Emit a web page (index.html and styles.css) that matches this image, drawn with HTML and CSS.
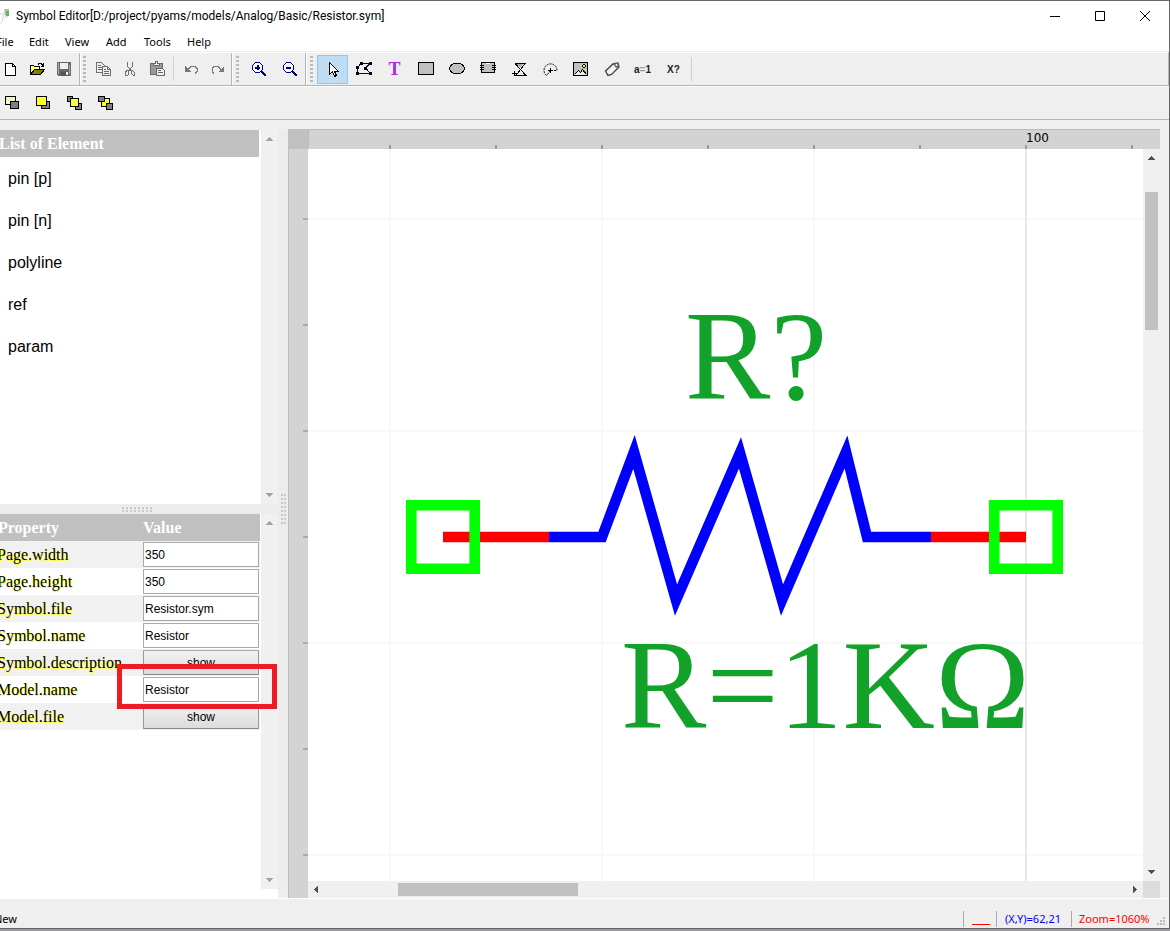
FILE: index.html
```
<!DOCTYPE html>
<html lang="en">
<head>
<meta charset="utf-8">
<title>Symbol Editor</title>
<link rel="stylesheet" href="styles.css">
</head>
<body>
<div class="window">
  <header class="titlebar">
    <svg class="app-icon" width="12" height="18" viewBox="0 0 12 18"><path d="M0 7Q4 5 3 11T0 16M4 5l2 6 3-3" fill="none" stroke="#d0d3df"/><path d="M4 2h5v6H5z" fill="#b5bab8"/><path d="M6 4h3v5H6z" fill="#62b562"/></svg>
    <h1 class="title">Symbol Editor[D:/project/pyams/models/Analog/Basic/Resistor.sym]</h1>
    <div class="window-controls">
      <button aria-label="Minimize"><svg width="12" height="12"><path d="M1 6.500h10" stroke="#000"/></svg></button>
      <button aria-label="Maximize"><svg width="12" height="12"><path d="M1.500 1.500h9v9h-9z" fill="none" stroke="#000"/></svg></button>
      <button aria-label="Close"><svg width="12" height="12"><path d="M1 1l10 10M11 1L1 11" stroke="#000"/></svg></button>
    </div>
  </header>
  <nav class="menubar">
    <button class="m-file">File</button><button class="m-edit">Edit</button><button class="m-view">View</button><button class="m-add">Add</button><button class="m-tools">Tools</button><button class="m-help">Help</button>
  </nav>

  <div class="toolbar">
    <div class="group group-first">
      <button class="narrow" aria-label="New"><svg class="icon" viewBox="0 0 16 16"><path d="M3.500 2.500h7l3 3v9h-10z" fill="#fff" stroke="#000"/><path d="M10.500 2.500v3h3" fill="none" stroke="#000"/></svg></button>
      <button class="narrow" aria-label="Open"><svg class="icon" viewBox="0 0 16 16"><path d="M1.500 13.500v-9h3l1 1h5v3" fill="#ffff80" stroke="#000"/><path d="M1.500 13.500l4-5h10l-4 5z" fill="#808000" stroke="#000"/><path d="M9 3.500l1-1h2l2 2M14.500 2v3h-3" fill="none" stroke="#000"/></svg></button>
      <button class="narrow" aria-label="Save"><svg class="icon" viewBox="0 0 16 16"><path d="M1 1h14v14H2L1 14z" fill="#686868"/><path d="M4 2h8v6H4z" fill="#efefef"/><path d="M2 2h1v11H2zM13 4h1v9h-1z" fill="#aaa"/><path d="M5 11h7v4H5z" fill="#555"/><path d="M10 11h2v3h-2z" fill="#eee"/></svg></button>
    </div>
    <div class="group">
      <span class="grip"></span>
      <button class="narrow" aria-label="Copy"><svg class="icon" viewBox="0 0 16 16"><g fill="#efefef" stroke="#6e6e6e"><path d="M1.500 1.500h5l3 3v7h-8z"/><path d="M3 4.500h3M3 6.500h5M3 8.500h5"/><path d="M7.500 5.500h5l3 3v6h-8z"/><path d="M12.500 5.500v3h3M9 8.500h2M9 10.500h5M9 12.500h5" fill="none"/></g></svg></button>
      <button class="narrow" aria-label="Cut"><svg class="icon" viewBox="0 0 16 16"><path d="M5.500 1v4l4 6M10.500 1v4l-4 6M8 7v2" fill="none" stroke="#707070"/><path d="M4.500 9.500h2v4l-1 1h-2v-3zM10.500 9.500h-1v3l2 2h1v-3z" fill="none" stroke="#707070"/></svg></button>
      <button class="narrow" aria-label="Paste"><svg class="icon" viewBox="0 0 16 16"><path d="M1.500 2.500h12v11h-12z" fill="#9a9a9a" stroke="#686868"/><path d="M4.500 4.500v-2h2v-2h2v2h2v2z" fill="#efefef" stroke="#686868"/><path d="M7.500 7.500h6l2 2v5h-8z" fill="#efefef" stroke="#686868"/><path d="M9 9.500h3M9 11.500h5" stroke="#686868"/></svg></button>
      <span class="divider wide"></span>
      <button class="narrow" aria-label="Undo"><svg class="icon" viewBox="0 0 16 16"><path d="M5 8.500l3-3h4l2 2v3l-2 2" fill="none" stroke="#777"/><path d="M2 5v6h6z" fill="#777"/></svg></button>
      <button class="narrow" aria-label="Redo"><svg class="icon" viewBox="0 0 16 16"><path d="M11 8.500l-3-3H4l-2 2v3l2 2" fill="none" stroke="#777"/><path d="M14 5v6H8z" fill="#777"/></svg></button>
    </div>
    <div class="group">
      <span class="grip grip-wide"></span>
      <button aria-label="Zoom in"><svg class="icon" viewBox="0 0 16 16"><path d="M4.500 1.500h4l3 3v4l-3 3h-4l-3-3v-4z" fill="#f7f7ff" stroke="#000080"/><path d="M4 6h5v1H4zM4 6h5v1.500H4zM6 4h1.500v5H6z" fill="#000080"/><path d="M10 10l5 5" stroke="#000080" stroke-width="2"/></svg></button>
      <button aria-label="Zoom out"><svg class="icon" viewBox="0 0 16 16"><path d="M4.500 1.500h4l3 3v4l-3 3h-4l-3-3v-4z" fill="#f7f7ff" stroke="#000080"/><path d="M4 6h5v2H4z" fill="#000080"/><path d="M10 10l5 5" stroke="#000080" stroke-width="2"/></svg></button>
    </div>
    <div class="group group-last">
      <span class="grip grip-wide"></span>
      <button class="active" aria-label="Select" aria-pressed="true"><svg class="icon" viewBox="0 0 16 16"><path d="M4.500 1.500v12l3-3 2 5 2-1-2-4h4z" fill="#fff" stroke="#000"/></svg></button>
      <button aria-label="Polyline"><svg class="icon" viewBox="0 0 16 16"><path d="M14 2.500H5L1.500 6.500v6h13L9.500 7z" fill="none" stroke="#000080"/><path d="M4 1h3v3H4zM13 1h3v3h-3zM0 5h3v3H0zM8 6h3v3H8zM0 11h3v3H0zM13 11h3v3h-3z"/></svg></button>
      <button class="tool-text" aria-label="Text">T</button>
      <button aria-label="Rectangle"><svg class="icon" viewBox="0 0 16 16"><path d="M.5 1.500h15v12H.5z" fill="#c0c0c0" stroke="#000"/></svg></button>
      <button aria-label="Ellipse"><svg class="icon" viewBox="0 0 16 16"><ellipse cx="8" cy="7.500" rx="7.500" ry="5.500" fill="#c0c0c0" stroke="#000"/></svg></button>
      <button aria-label="Component"><svg class="icon" viewBox="0 0 16 16"><path d="M1.500 1.500h13v10h-13z" fill="#c0c0c0" stroke="#000"/><path d="M0 4.500h4M0 6.500h4M0 8.500h4M12 4.500h4M12 6.500h4M12 8.500h4" stroke="#000"/><path d="M6 2.500h4" stroke="#fff"/></svg></button>
      <button aria-label="Polygon"><svg class="icon" viewBox="0 0 16 16"><path d="M4 2.500h10L5 14.500h10L4 2.500" fill="none" stroke="#000"/><path d="M6 3h6L9 7z" fill="#aaa"/><path d="M1 12.500h5M3.500 10v5" stroke="#000"/></svg></button>
      <button aria-label="Arc"><svg class="icon smooth" viewBox="0 0 16 16"><path d="M4.500 14.500A6.500 6.500 0 1 1 15 9.500H8.500z" fill="none" stroke="#000" stroke-dasharray="2 1"/><path d="M6 9.500h5M8.500 7v5" stroke="#000"/></svg></button>
      <button aria-label="Image"><svg class="icon" viewBox="0 0 16 16"><path d="M.5 1.500h14v13H.5z" fill="#c0c0c0" stroke="#000"/><path d="M2 14l3-4 2 2 2-3 4 5z" fill="#eee"/><path d="M1.500 13.500l4-4 2 2 2-3 4 5" fill="none" stroke="#000"/><path d="M9 4h1V3h2v1h1v2h-1v1h-2V6H9z"/><path d="M10 4h2v2h-2z" fill="#ff0"/></svg></button>
      <button aria-label="Label"><svg class="icon smooth" viewBox="0 0 16 16"><path d="M1.500 10L9 3l5-1 1 4-7.500 7.500L4 14.500z" fill="#f4f4f4" stroke="#444" stroke-width="1.400"/><path d="M9 3l5-1 1 4-3 1z" fill="#666"/><circle cx="12.500" cy="4" r="1" fill="#fff"/></svg></button>
      <button class="tool-label" aria-label="Parameter">a<span class="eq">=</span>1</button>
      <button class="tool-label" aria-label="Reference">X?</button>
      <span class="divider"></span>
    </div>
  </div>

  <div class="toolbar toolbar-order">
    <div class="group group-first group-last">
      <button aria-label="Bring forward"><svg class="icon" viewBox="0 0 16 16"><path d="M1.500 1.500h10v8h-10z" fill="#f4f4c0" stroke="#000"/><path d="M6.500 6.500h8v7h-8z" fill="#808080" stroke="#000"/></svg></button>
      <button aria-label="Bring to front"><svg class="icon" viewBox="0 0 16 16"><path d="M6.500 6.500h8v7h-8z" fill="#808080" stroke="#000"/><path d="M1.500 1.500h10v9h-10z" fill="#ffff30" stroke="#000"/></svg></button>
      <button aria-label="Send backward"><svg class="icon" viewBox="0 0 16 16"><path d="M1.500 1.500h5v5h-5zM9.500 8.500h6v6h-6z" fill="#808080" stroke="#000"/><path d="M4.500 3.500h8v8h-8z" fill="#ffff30" stroke="#000"/></svg></button>
      <button aria-label="Send to back"><svg class="icon" viewBox="0 0 16 16"><path d="M4.500 3.500h8v8h-8z" fill="#ffff30" stroke="#000"/><path d="M1.500 1.500h6v5h-6zM9.500 8.500h6v6h-6z" fill="#808080" stroke="#000"/></svg></button>
    </div>
  </div>

  <main class="workspace">
    <aside class="sidebar">
      <div class="panels">
        <section class="panel elements">
          <div class="content">
            <h2 class="panel-title">List of Element</h2>
            <ul class="element-list"><li>pin [p]</li><li>pin [n]</li><li>polyline</li><li>ref</li><li>param</li></ul>
          </div>
          <div class="scroll-v light"><svg class="arrow" viewBox="0 0 7 4"><path d="M0 4h7L3.500 0z"/></svg><svg class="arrow" viewBox="0 0 7 4"><path d="M0 0h7L3.500 4z"/></svg></div>
        </section>
        <div class="split-h"><span class="dots dots-h"></span></div>
        <section class="panel properties">
          <div class="content">
            <table class="props">
              <thead><tr><th>Property</th><th>Value</th></tr></thead>
              <tbody>
                <tr><td><label for="pw">Page.width</label></td><td><input id="pw" type="text" value="350"></td></tr>
                <tr><td><label for="ph">Page.height</label></td><td><input id="ph" type="text" value="350"></td></tr>
                <tr><td><label for="sf">Symbol.file</label></td><td><input id="sf" type="text" value="Resistor.sym"></td></tr>
                <tr><td><label for="sn">Symbol.name</label></td><td><input id="sn" type="text" value="Resistor"></td></tr>
                <tr><td><label for="sd">Symbol.description</label></td><td><button id="sd">show</button></td></tr>
                <tr><td><label for="mn">Model.name</label></td><td><input id="mn" type="text" value="Resistor"></td></tr>
                <tr><td><label for="mf">Model.file</label></td><td><button id="mf">show</button></td></tr>
              </tbody>
            </table>
          </div>
          <div class="scroll-v light"><svg class="arrow" viewBox="0 0 7 4"><path d="M0 4h7L3.500 0z"/></svg><svg class="arrow" viewBox="0 0 7 4"><path d="M0 0h7L3.500 4z"/></svg></div>
          <div class="highlight"></div>
        </section>
      </div>
      <div class="split-v"><span class="dots dots-v"></span></div>
    </aside>

    <section class="editor">
      <div class="corner"></div>
      <svg class="ruler-top"><defs><pattern id="tx" x="-26" width="106" height="20" patternUnits="userSpaceOnUse"><path d="M0 15h2v5H0z" fill="#999"/></pattern></defs><rect width="100%" height="100%" fill="url(#tx)"/><text x="717" y="12">100</text></svg>
      <svg class="ruler-left"><defs><pattern id="ty" y="-37" width="19" height="106" patternUnits="userSpaceOnUse"><path d="M14 0h5v2h-5z" fill="#aaa"/></pattern></defs><rect width="100%" height="100%" fill="url(#ty)"/></svg>
      <div class="view">
        <svg class="canvas">
          <defs><pattern id="grid" x="81" y="69" width="212" height="212" patternUnits="userSpaceOnUse"><path d="M0 0h2v212H0zM0 0h212v2H0z" fill="#f8f8f8"/></pattern></defs>
          <rect width="100%" height="100%" fill="url(#grid)"/>
          <path d="M717 0h2v2000h-2z" fill="#e8e8e8"/>
          <g fill="none" stroke-width="10.600">
            <path d="M135 388H241M623 388H718" stroke="#f00"/>
            <path d="M241 388H294L326 303 368 451 432 304 474 451 538 303 559 388H623" stroke="#00f" stroke-miterlimit="10"/>
            <path d="M103.300 356.300h63.400v63.400h-63.400zM686.300 356.300h63.400v63.400h-63.400z" stroke="#0f0"/>
          </g>
          <text x="377" y="250">R?</text>
          <text x="313" y="579">R=1KΩ</text>
        </svg>
        <div class="scroll-v"><svg class="arrow" viewBox="0 0 7 4"><path d="M0 4h7L3.500 0z"/></svg><span class="thumb"></span><svg class="arrow" viewBox="0 0 7 4"><path d="M0 0h7L3.500 4z"/></svg></div>
        <div class="scroll-h"><svg class="arrow side" viewBox="0 0 4 7"><path d="M4 0v7L0 3.500z"/></svg><span class="thumb"></span><svg class="arrow side" viewBox="0 0 4 7"><path d="M0 0v7L4 3.500z"/></svg></div>
        <div class="scroll-corner"></div>
      </div>
    </section>
  </main>

  <footer class="statusbar">
    <span class="message">New</span>
    <span class="cell modified"><i></i></span>
    <span class="cell position">(X,Y)=62,21</span>
    <span class="cell zoom">Zoom=1060%</span>
    <svg class="size-grip" width="9" height="9"><path d="M6 0h2v2H6zM3 3h2v2H3zM6 3h2v2H6zM0 6h2v2H0zM3 6h2v2H3zM6 6h2v2H6z" fill="#bbb"/></svg>
  </footer>
</div>
</body>
</html>
```
FILE: styles.css
```
* { box-sizing: border-box; }
body { margin: 0; overflow: hidden; background: #9a9a9e; }
button { border: 0; padding: 0; background: none; color: #000; font: inherit; }
svg { display: block; }

.window {
  display: flex; flex-direction: column; height: calc(100vh - 2px); overflow: hidden;
  border: 1px solid #666; border-left: 0; background: #efefef;
  font-family: "Noto Sans", "Open Sans", sans-serif; font-size: 11px; color: #000;
}

.titlebar { display: flex; align-items: center; height: 29px; background: #fff; }
.app-icon { flex: none; }
.title { flex: 1; margin: 0 0 0 4px; font: 12px Roboto, "Noto Sans", sans-serif; white-space: nowrap; }
.window-controls { display: flex; padding-right: 2px; }
.window-controls button { display: grid; place-items: center; width: 45px; height: 27px; }

.menubar { display: flex; height: 22px; padding-top: 1px; margin-left: -4px; background: #fff; border-bottom: 1px solid #eee; }
.menubar button { text-align: left; }
.m-file { width: 33px; }
.m-edit { width: 36px; }
.m-view { width: 41px; }
.m-add { width: 38px; }
.m-tools { width: 43px; }
.m-help { width: 40px; }

.toolbar { display: flex; height: 34px; flex: none; border-top: 1px solid #fff; border-bottom: 1px solid #b4b4b4; border-right: 1px solid #b4b4b4; }
.toolbar-order { border-right: 0; }
.group { display: flex; align-items: center; border-right: 1px solid #b4b4b4; border-left: 1px solid #fff; }
.group-first { margin-left: -5px; padding-right: 2px; }
.group-last { border-right: 0; }
.group button { display: grid; place-items: center; width: 31px; height: 29px; }
.group .narrow { width: 27px; }
.group .active { background: #c0dcf3; border: 1px solid #90c8f6; }
.icon { width: 16px; height: 16px; shape-rendering: crispEdges; }
.smooth { shape-rendering: auto; }
.grip { width: 3px; height: 27px; margin: 0 3px 0 2px; background: repeating-linear-gradient(#b8b8b8 0 2px, #efefef 2px 4px); }
.grip-wide { margin: 0 4px 0 3px; }
.divider { width: 1px; height: 24px; margin: 0 2px; background: #d0d0d0; }
.wide { margin: 0 3px; }
.group .tool-text { font: bold 18px "Liberation Serif", serif; color: #a030d0; }
.group .tool-label { display: block; font: bold 10px "Liberation Sans", sans-serif; color: #222; }
.eq { color: #999; }

.workspace { display: flex; flex: 1; min-height: 0; padding-right: 9px; border-bottom: 1px solid #fff; }
.sidebar { display: flex; width: 288px; flex: none; padding-top: 10px; }
.panels { display: flex; flex-direction: column; width: 278px; background: #fff; }
.panel { display: flex; position: relative; background: #fff; }
.elements { flex: 0 0 374px; }
.properties { flex: 1; min-height: 0; margin-bottom: 9px; }
.content { flex: 1; overflow: hidden; padding-right: 1px; }
.panel-title { margin: 0 1px 0 -1px; height: 27px; background: #c0c0c0; color: #fff; font: bold 16px/27px "Liberation Serif", serif; }
.element-list { margin: 0; padding: 1px 8px; list-style: none; font: 16px/42px "Liberation Sans", sans-serif; }

.scroll-v { display: flex; flex-direction: column; justify-content: space-between; align-items: center; width: 17px; padding: 7px 0; background: #f0f0f0; }
.scroll-h { display: flex; justify-content: space-between; align-items: center; height: 17px; padding: 0 6px; background: #f0f0f0; }
.arrow { width: 7px; height: 4px; fill: #505050; shape-rendering: crispEdges; flex: none; }
.side { width: 4px; height: 7px; }
.light .arrow { fill: #a3a3a3; }
.thumb { background: #c1c1c1; }
.scroll-v .thumb { width: 13px; height: 138px; margin: 32px 0 auto; }
.scroll-h .thumb { width: 180px; height: 13px; margin: 0 auto 0 80px; }
.scroll-corner { background: #dcdcdc; }

.split-h { display: flex; align-items: center; padding-left: 122px; height: 10px; flex: none; background: #ececec; }
.split-v { display: flex; justify-content: center; width: 10px; padding-top: 364px; margin-bottom: 9px; background: #ececec; }
.dots-h { width: 31px; height: 5px; background: repeating-linear-gradient(90deg, #c8c8c8 0 2px, transparent 2px 4px); border-bottom: 0; }
.dots-v { width: 5px; height: 32px; background: repeating-linear-gradient(#c8c8c8 0 2px, transparent 2px 4px); }
.dots { display: grid; place-items: center; }
.dots::before { content: ""; background: #ececec; }
.dots-h::before { width: 100%; height: 1px; }
.dots-v::before { width: 1px; height: 100%; }

.props { width: calc(100% + 3px); margin-left: -3px; border-collapse: collapse; table-layout: fixed; font: 16px/16px "Liberation Serif", serif; }
.props th { height: 27px; padding: 0 1px; background: #c0c0c0; color: #fff; text-align: left; }
.props th + th { padding: 0 2px; }
.props th:first-child { width: 144px; }
.props td { height: 27px; padding: 0; vertical-align: middle; text-shadow: 1px 1px #ff0; white-space: nowrap; }
.props tbody tr:nth-child(odd) { background: #f1f1f1; }
.props td + td { padding: 0 1px 0 2px; text-shadow: none; }
.props input, .props button { display: block; width: 100%; height: 25px; font: 12px "Liberation Sans", sans-serif; color: #000; border: 1px solid #a9a9a9; }
.props input { padding: 0 1px; background: #fff; }
.props button { background: linear-gradient(#f2f2f2, #dcdcdc); border-color: #aaa #999 #888; border-radius: 1px; }
.highlight { position: absolute; left: 117px; top: 150px; width: 160px; height: 45px; border: 5px solid #ed1c24; }

.editor { display: grid; flex: 1; min-width: 0; margin-top: 9px; grid-template: 20px minmax(0, 1fr) / 20px minmax(0, 1fr); }
.corner { background: #c0c0c0; }
.ruler-top { width: 100%; height: 20px; background: #d3d3d3; border-top: 1px solid #bbb; border-left: 1px solid #bbb; font: 12px "DejaVu Sans", sans-serif; }
.ruler-left { width: 20px; height: 100%; background: #d3d3d3; border-left: 1px solid #bbb; }
.view { display: grid; grid-template: minmax(0, 1fr) 17px / minmax(0, 1fr) 17px; }
.canvas { width: 100%; height: 100%; background: #fff; font: 128px "Liberation Serif", serif; fill: #12a22a; }

.statusbar { display: flex; align-items: center; height: 29px; flex: none; padding: 10px 3px 0 0; }
.message { flex: 1; margin-left: -6px; }
.cell { height: 16px; line-height: 16px; border-left: 1px solid #aaa; padding-left: 8px; white-space: nowrap; }
.modified { width: 33px; }
.modified i { display: block; width: 18px; height: 14px; border-bottom: 1px solid #f00; }
.position { width: 75px; color: #00f; }
.zoom { width: 86px; color: #f00; padding-left: 7px; }
.size-grip { align-self: flex-end; margin-bottom: 2px; }
```
